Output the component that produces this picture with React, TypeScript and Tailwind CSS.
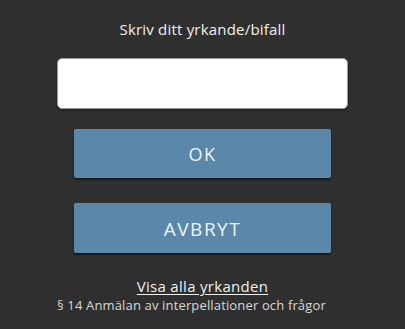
export default function App() {
  return (
    <div
      className="flex h-[329px] w-[405px] flex-col items-center bg-[#2f2f2f] text-white"
      style={{ fontFamily: '"Open Sans", "Liberation Sans", sans-serif' }}
    >
      <p className="mt-[19px] text-[15px] leading-[20px] tracking-[0.2px] text-[#f0f0f0]">
        Skriv ditt yrkande/bifall
      </p>
      <input
        type="text"
        className="mt-[19px] h-[51px] w-[291px] rounded-[5px] border border-[#9a9a9a] bg-white shadow-[0_1px_2px_rgba(0,0,0,0.5)] outline-none"
      />
      <button className="mt-[20px] h-[49px] w-[257px] rounded-[2px] bg-[#5a87aa] pt-[2px] text-[18px] tracking-[1.5px] text-[#eef3f7] shadow-[0_2px_2px_rgba(0,0,0,0.45)]">
        OK
      </button>
      <button className="mt-[25px] h-[50px] w-[257px] rounded-[2px] bg-[#5a87aa] pt-[3px] text-[19px] tracking-[1.5px] text-[#eef3f7] shadow-[0_2px_2px_rgba(0,0,0,0.45)]">
        AVBRYT
      </button>
      <a href="#" className="mt-[24px] text-[15px] leading-[19px] tracking-[0.3px] text-[#f0f0f0] underline underline-offset-2">
        Visa alla yrkanden
      </a>
      <p className="mt-[1px] w-[291px] text-left text-[13px] leading-[16px] tracking-[0.15px] text-[#d8d8d8]">
        § 14 Anmälan av interpellationer och frågor
      </p>
    </div>
  );
}
